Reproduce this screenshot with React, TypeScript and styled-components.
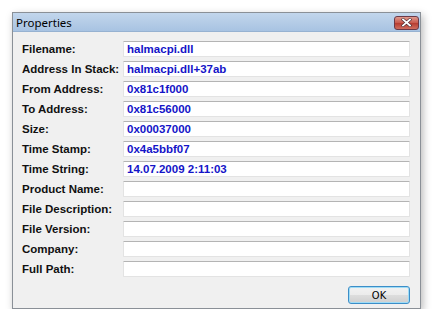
import { Fragment } from 'react'
import styled, { createGlobalStyle } from 'styled-components'

const Global = createGlobalStyle`
  html, body {
    margin: 0;
    padding: 0;
    background: #ffffff;
  }
`

const Page = styled.div`
  padding: 12px 0 0 12px;
`

const Window = styled.div`
  width: 409px;
  height: 297px;
  box-sizing: border-box;
  border: 1px solid #8a9097;
  background: #f0f0f0;
  display: flex;
  flex-direction: column;
  box-shadow: 2px 3px 8px rgba(0, 0, 0, 0.28);
`

const TitleBar = styled.div`
  height: 19px;
  background: linear-gradient(#c2d6ec, #a8c3e2);
  border-bottom: 1px solid #97b2d1;
  display: flex;
  align-items: center;
  justify-content: space-between;
  padding: 0 1px 0 3px;
`

const Title = styled.span`
  font-family: 'Noto Sans', 'Liberation Sans', sans-serif;
  font-size: 11.5px;
  color: #000000;
`

const CloseButton = styled.div`
  width: 25px;
  height: 14px;
  box-sizing: border-box;
  border: 1px solid #6a3a48;
  border-radius: 3px;
  background: linear-gradient(#e09a8e, #c7574b 50%, #b63c30 51%, #cf6e5f);
  display: flex;
  align-items: center;
  justify-content: center;
  margin-top: 1px;
`

const Body = styled.div`
  flex: 1;
  display: flex;
  flex-direction: column;
  padding: 9px 10px 4px 9px;
`

const Grid = styled.div`
  display: grid;
  grid-template-columns: 101px 1fr;
  row-gap: 4px;
`

const Label = styled.div`
  font-family: 'Liberation Sans', Arial, sans-serif;
  font-weight: bold;
  font-size: 11.5px;
  color: #111111;
  height: 16px;
  line-height: 17px;
  white-space: nowrap;
`

const Field = styled.div`
  height: 16px;
  box-sizing: border-box;
  background: #ffffff;
  border: 1px solid #e3e3e3;
  border-top: 1px solid #b4b4b4;
  border-radius: 1px;
  padding: 0 3px;
  font-family: 'Liberation Sans', Arial, sans-serif;
  font-weight: bold;
  font-size: 11.5px;
  line-height: 14px;
  color: #1414c8;
  white-space: nowrap;
  overflow: hidden;
`

const Footer = styled.div`
  margin-top: 9px;
  display: flex;
  justify-content: flex-end;
`

const OkButton = styled.button`
  width: 62px;
  height: 18px;
  box-sizing: border-box;
  border: 1px solid #3c8ec8;
  border-radius: 3px;
  background: linear-gradient(#f2f2f2, #ebebeb 50%, #dddddd 51%, #cfcfcf);
  box-shadow: inset 0 0 0 1px #9fdcf6;
  font-family: 'DejaVu Sans Condensed', 'DejaVu Sans', sans-serif;
  font-size: 11px;
  color: #000000;
  padding: 0;
`

const rows: [string, string][] = [
  ['Filename:', 'halmacpi.dll'],
  ['Address In Stack:', 'halmacpi.dll+37ab'],
  ['From Address:', '0x81c1f000'],
  ['To Address:', '0x81c56000'],
  ['Size:', '0x00037000'],
  ['Time Stamp:', '0x4a5bbf07'],
  ['Time String:', '14.07.2009 2:11:03'],
  ['Product Name:', ''],
  ['File Description:', ''],
  ['File Version:', ''],
  ['Company:', ''],
  ['Full Path:', ''],
]

export default function App() {
  return (
    <Page>
      <Global />
      <Window>
        <TitleBar>
          <Title>Properties</Title>
          <CloseButton>
            <svg width="11" height="9" viewBox="0 0 11 9">
              <path d="M2 1.5 L9 7.5 M9 1.5 L2 7.5" stroke="#4a2a30" strokeWidth="3" strokeLinecap="square" />
              <path d="M2 1.5 L9 7.5 M9 1.5 L2 7.5" stroke="#ffffff" strokeWidth="1.8" strokeLinecap="square" />
            </svg>
          </CloseButton>
        </TitleBar>
        <Body>
          <Grid>
            {rows.map(([label, value]) => (
              <Fragment key={label}>
                <Label>{label}</Label>
                <Field>{value}</Field>
              </Fragment>
            ))}
          </Grid>
          <Footer>
            <OkButton>OK</OkButton>
          </Footer>
        </Body>
      </Window>
    </Page>
  )
}
